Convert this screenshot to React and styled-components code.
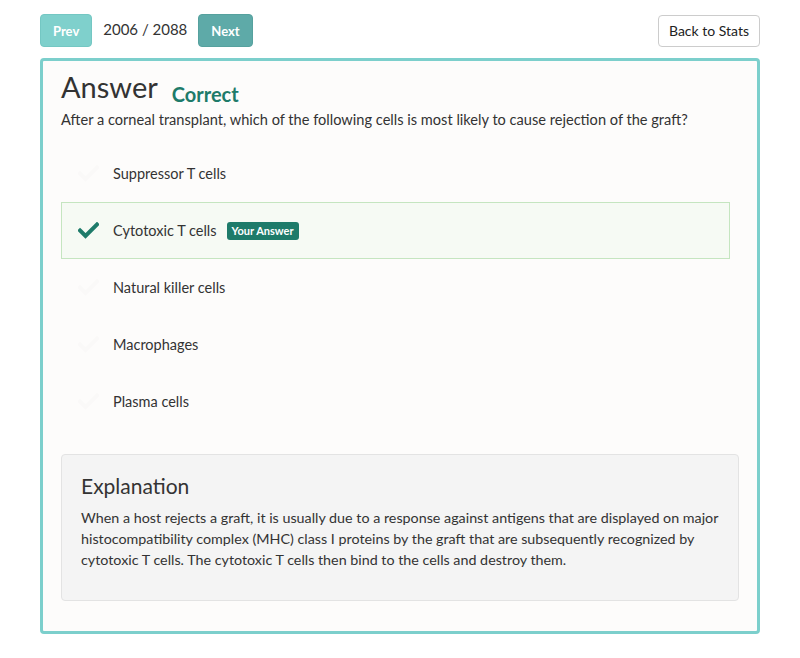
import React from 'react'
import styled, { createGlobalStyle } from 'styled-components'

const GlobalStyle = createGlobalStyle`
	body {
		margin: 0;
		background: #ffffff;
		font-family: Lato, "Open Sans", sans-serif;
		color: #333333;
	}
`

const Page = styled.div`
	padding: 14px 40px 24px 40px;
`
const Toolbar = styled.div`
	display: flex;
	align-items: center;
	height: 33px;
	margin-bottom: 11px;
`
const NavButton = styled.button`
	height: 33px;
	padding: 0 12px;
	border: 1px solid ${p => p.$light ? '#74c7c3' : '#56a19e'};
	border-radius: 4px;
	background: ${p => p.$light ? '#7fd0cc' : '#5eaaa8'};
	color: #ffffff;
	font-family: inherit;
	font-weight: 700;
	font-size: 13px;
	cursor: pointer;
`
const Counter = styled.span`
	font-size: 15px;
	margin: 0 11px;
	color: #333;
	position: relative;
	top: -2px;
`
const BackButton = styled.button`
	margin-left: auto;
	height: 32px;
	padding: 0 10px;
	border: 1px solid #cccccc;
	border-radius: 4px;
	background: #ffffff;
	color: #222;
	font-family: inherit;
	font-size: 14px;
`
const Card = styled.div`
	border: 3px solid #7ccfcc;
	border-radius: 4px;
	background: #fdfcfb;
	padding: 7px 18px 30px 18px;
`
const TitleRow = styled.div`
	display: flex;
	align-items: baseline;
`
const Title = styled.h1`
	margin: 0;
	font-size: 29px;
	font-weight: 400;
	color: #333;
	line-height: 38px;
`
const Status = styled.span`
	margin-left: 14px;
	font-size: 20px;
	font-weight: 700;
	color: #1e7b6a;
	position: relative;
	top: 4px;
`
const Question = styled.p`
	margin: 4px 0 15px 0;
	font-size: 14.6px;
	line-height: 20px;
`
const Options = styled.div`
	display: flex;
	flex-direction: column;
	margin-right: 9px;
	margin-bottom: 24px;
`
const Option = styled.div`
	display: flex;
	align-items: center;
	height: 57px;
	box-sizing: border-box;
	padding-left: 16px;
	border: 1px solid ${p => p.$picked ? '#c5e5c0' : 'transparent'};
	background: ${p => p.$picked ? '#f6faf4' : 'transparent'};
	font-size: 14.5px;
	color: #333;
`
const Check = styled.span`
	display: flex;
	width: 35px;
	color: ${p => p.$picked ? '#1e7b6a' : '#faf9f8'};
`
const Badge = styled.span`
	margin-left: 10px;
	padding: 3px 5px;
	border-radius: 3px;
	background: #1e7b6a;
	color: #ffffff;
	font-size: 11px;
	font-weight: 700;
	line-height: 12px;
`
const Explanation = styled.div`
	background: #f4f4f4;
	border: 1px solid #e3e3e3;
	border-radius: 4px;
	padding: 17px 19px 30px 19px;
`
const ExplTitle = styled.h2`
	margin: 0 0 7px 0;
	font-size: 21px;
	font-weight: 400;
	line-height: 28px;
	color: #333;
`
const ExplText = styled.p`
	margin: 0;
	font-size: 14.3px;
	line-height: 21px;
	color: #333;
`

const CheckIcon = () => (
	<svg width="21" height="17" viewBox="0 0 21 17">
		<path d="M2 8.5 L7.5 14 L19 2.5" fill="none" stroke="currentColor" strokeWidth="4" strokeLinecap="square" />
	</svg>
)

const answers = [
	'Suppressor T cells',
	'Cytotoxic T cells',
	'Natural killer cells',
	'Macrophages',
	'Plasma cells',
]
const picked = 1

const App = () => {
	return <Page>
		<GlobalStyle />
		<Toolbar>
			<NavButton $light>Prev</NavButton>
			<Counter>2006 / 2088</Counter>
			<NavButton>Next</NavButton>
			<BackButton>Back to Stats</BackButton>
		</Toolbar>
		<Card>
			<TitleRow>
				<Title>Answer</Title>
				<Status>Correct</Status>
			</TitleRow>
			<Question>After a corneal transplant, which of the following cells is most likely to cause rejection of the graft?</Question>
			<Options>
				{answers.map((a, i) => <Option key={i} $picked={i === picked}>
					<Check $picked={i === picked}><CheckIcon /></Check>
					{a}
					{i === picked && <Badge>Your Answer</Badge>}
				</Option>)}
			</Options>
			<Explanation>
				<ExplTitle>Explanation</ExplTitle>
				<ExplText>
					When a host rejects a graft, it is usually due to a response against antigens that are displayed on major histocompatibility complex (MHC) class I proteins by the graft that are subsequently recognized by cytotoxic T cells. The cytotoxic T cells then bind to the cells and destroy them.
				</ExplText>
			</Explanation>
		</Card>
	</Page>
}

export default App
